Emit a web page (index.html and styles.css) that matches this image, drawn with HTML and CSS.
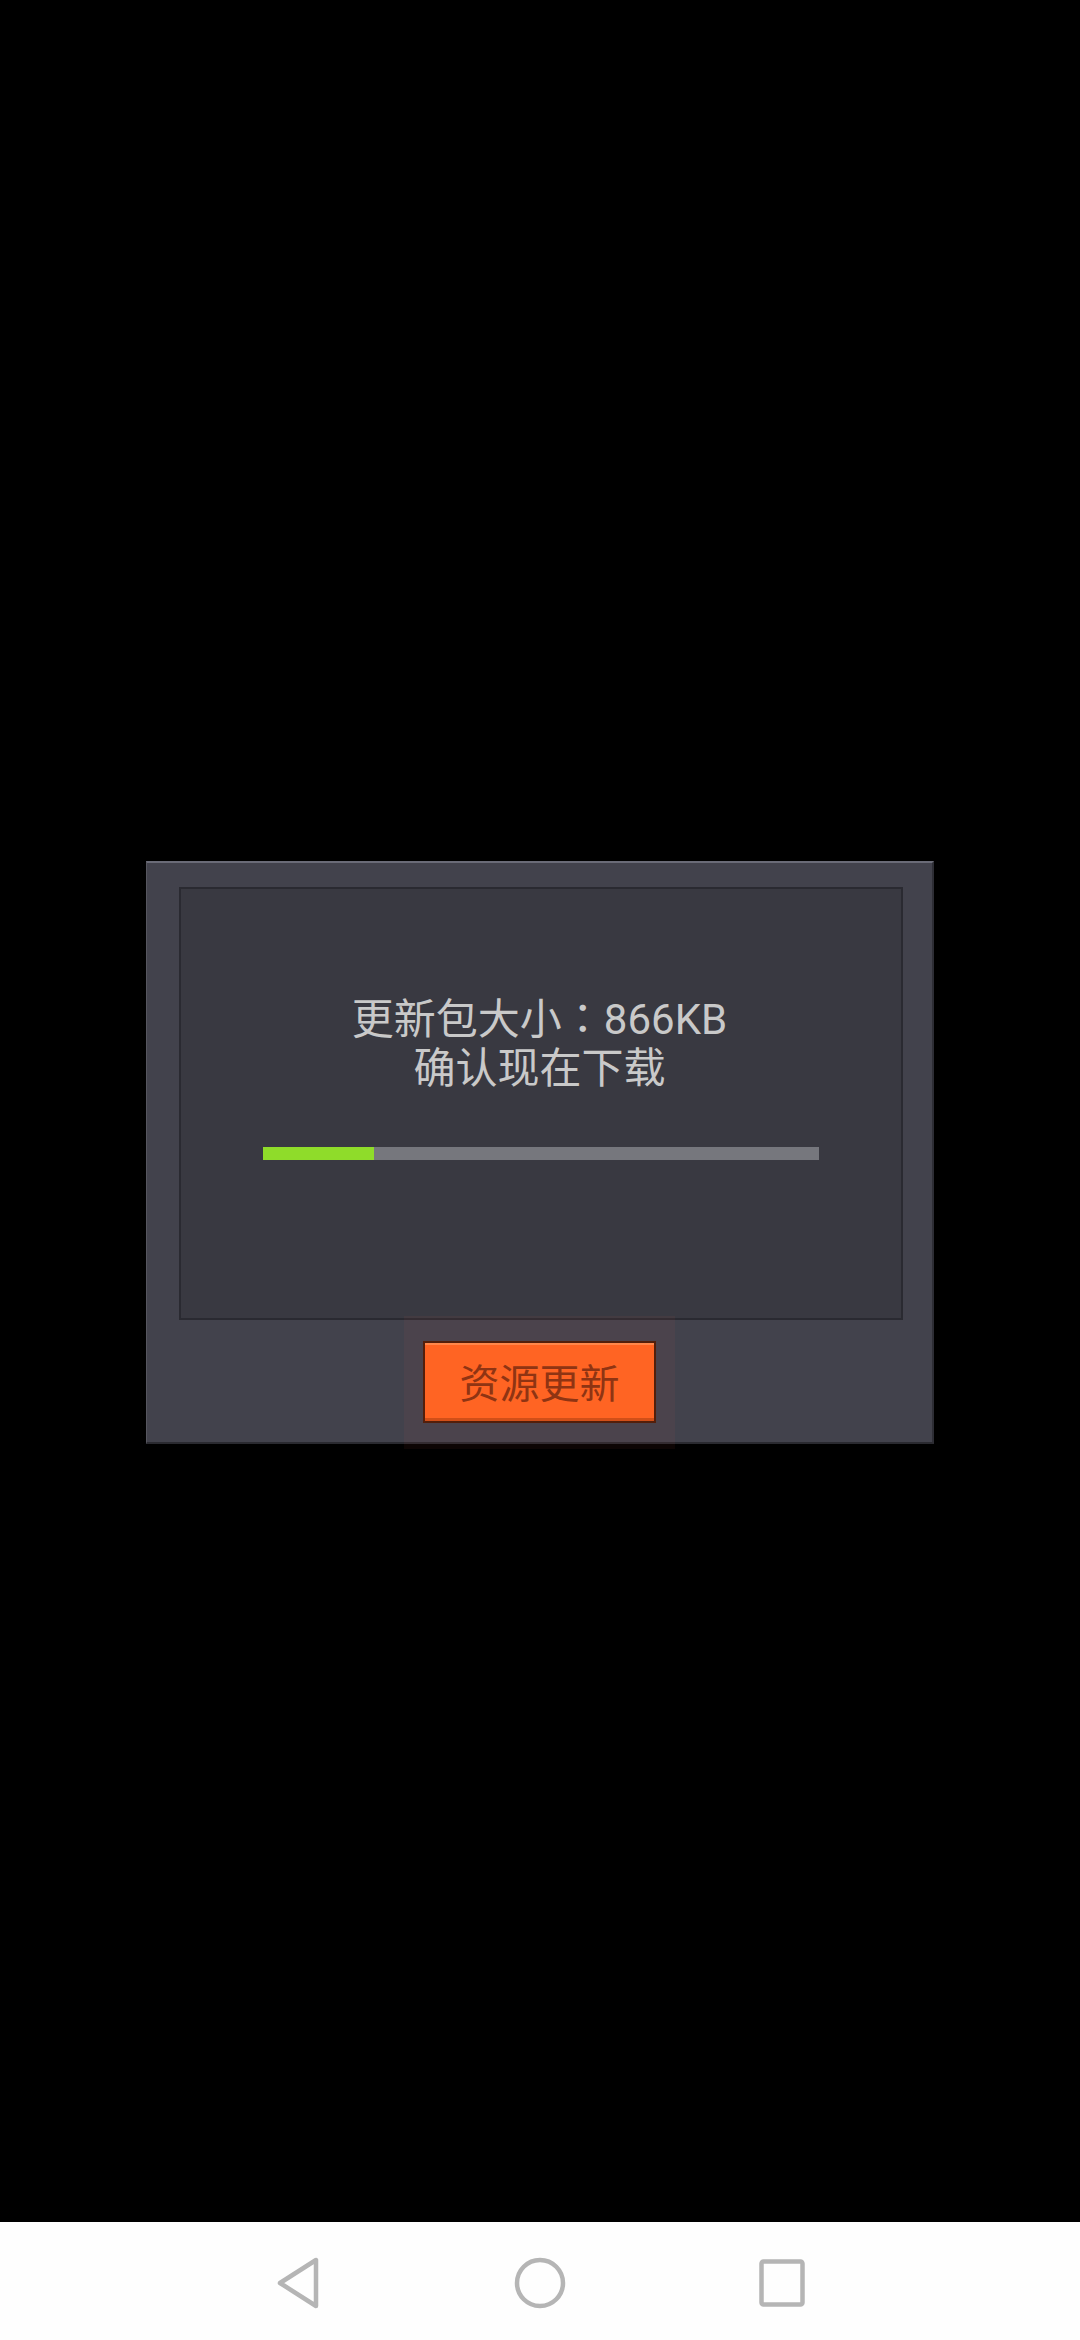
FILE: index.html
```html
<!DOCTYPE html>
<html lang="zh-CN">
<head>
<meta charset="utf-8">
<meta name="viewport" content="width=1080">
<link rel="stylesheet" href="styles.css">
</head>
<body>
<div class="screen">
  <div class="dialog">
    <div class="inner">
      <div class="msg">
        <div class="line">更新包大小<span class="colon" lang="zh-Hant">：</span>866KB</div>
        <div class="line">确认现在下载</div>
      </div>
      <div class="bar"><div class="fill" style="width:20%"></div></div>
    </div>
    <div class="actions">
      <div class="btn">资源更新</div>
    </div>
  </div>
</div>
<div class="navbar">
  <svg class="nav-icon" width="44" height="52" viewBox="0 0 44 52">
    <path d="M40 3 L40 49 L4 26 Z" fill="none" stroke="#b5b5b5" stroke-width="4.5" stroke-linejoin="round"/>
  </svg>
  <svg class="nav-icon" width="52" height="52" viewBox="0 0 52 52">
    <circle cx="26" cy="26" r="23" fill="none" stroke="#b5b5b5" stroke-width="4.5"/>
  </svg>
  <svg class="nav-icon" width="46" height="48" viewBox="0 0 46 48">
    <rect x="2.5" y="2.5" width="41" height="43" rx="2" fill="none" stroke="#b5b5b5" stroke-width="4.5"/>
  </svg>
</div>
</body>
</html>
```

FILE: styles.css
```css
html, body {
  margin: 0;
  padding: 0;
  background: #000;
}
body {
  width: 1080px;
  height: 2340px;
  overflow: hidden;
  font-family: "Noto Sans CJK SC", "Noto Sans", sans-serif;
}
.screen {
  height: 2222px;
  box-sizing: border-box;
  padding-top: 861px;
}
.dialog {
  width: 788px;
  height: 583px;
  margin-left: 146px;
  box-sizing: border-box;
  background: #42424c;
  border-top: 2px solid #6a6b77;
  border-left: 1px solid #56565f;
  border-right: 2px solid #2e2e35;
  border-bottom: 2px solid #2a2a30;
  padding: 24px 29px 0 32px;
  display: flex;
  flex-direction: column;
}
.inner {
  height: 433px;
  box-sizing: border-box;
  background: #393941;
  border: 2px solid #2a2a31;
  display: flex;
  flex-direction: column;
  align-items: center;
  padding-top: 106px;
}
.msg {
  color: #c9c9c9;
  font-family: Roboto, "Noto Sans CJK SC", sans-serif;
  font-size: 42px;
  line-height: 49px;
  text-align: center;
  padding-right: 3px;
}
.line {
  height: 49px;
}
.colon {
  font-family: Roboto, "Noto Sans CJK TC", "Noto Sans CJK SC", sans-serif;
}
.bar {
  margin-top: 54px;
  width: 556px;
  height: 13px;
  background: #76777d;
  display: flex;
}
.fill {
  height: 100%;
  background: #8fdc2a;
}
.actions {
  display: flex;
  justify-content: center;
  padding-top: 21px;
  padding-right: 3px;
}
.btn {
  position: relative;
  width: 233px;
  height: 82px;
  box-sizing: border-box;
  background: #ff6521;
  border: 2px solid #4a1c08;
  box-shadow: inset 0 -3px 0 #cf4f16, inset 0 2px 0 #ff8a4a;
  color: #8a3210;
  font-size: 40px;
  line-height: 76px;
  text-align: center;
}
.btn::before {
  content: "";
  position: absolute;
  left: -21px;
  right: -21px;
  top: -27px;
  bottom: -28px;
  background: rgba(255, 90, 70, 0.05);
  pointer-events: none;
}
.navbar {
  height: 118px;
  background: #fefefe;
  display: flex;
  align-items: center;
  justify-content: center;
}
.nav-icon {
  display: block;
  margin-top: 4px;
}
.navbar .nav-icon:nth-child(1) { margin-right: 194px; }
.navbar .nav-icon:nth-child(2) { margin-right: 193px; }
```
